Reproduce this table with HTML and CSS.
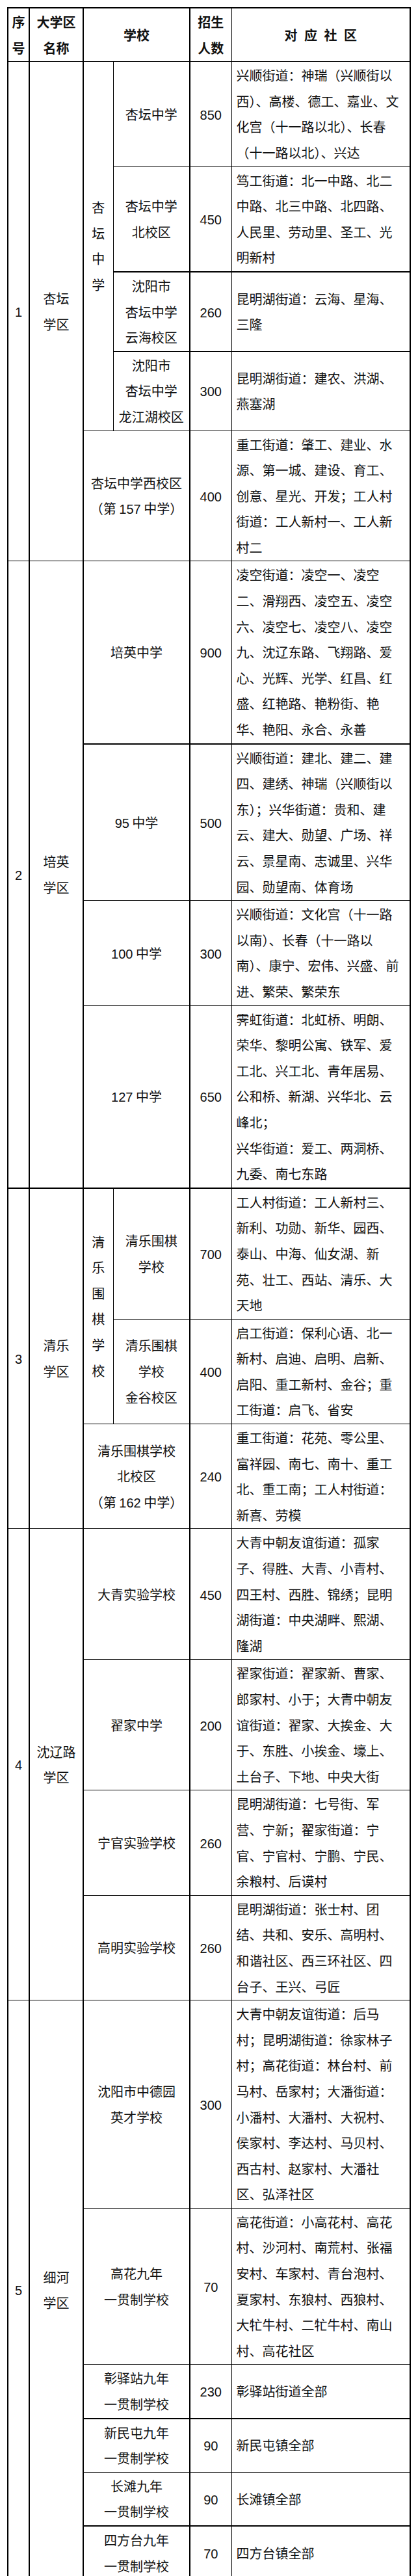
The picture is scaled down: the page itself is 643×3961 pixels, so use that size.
FILE: index.html
```html
<!DOCTYPE html>
<html lang="zh-CN">
<head>
<meta charset="utf-8">
<title>大学区对应社区</title>
<link rel="stylesheet" href="styles.css">
</head>
<body>
<div class="page">
<table class="t">
<colgroup><col class="w1"><col class="w2"><col class="w3"><col class="w4"><col class="w5"><col class="w6"></colgroup>
<thead>
<tr><th class="c1">序<br>号</th><th class="c2">大学区<br>名称</th><th colspan="2" class="sch">学校</th><th class="cnt">招生<br>人数</th><th class="com-h">对 应 社 区</th></tr>
</thead>
<tbody>
<tr><td rowspan="5" class="c1"><span class="n">1</span></td><td rowspan="5" class="c2">杏坛<br>学区</td><td rowspan="4" class="vt">杏<br>坛<br>中<br>学</td><td class="sch">杏坛中学</td><td class="cnt"><span class="n">850</span></td><td class="com">兴顺街道：神瑞（兴顺街以<br>西）、高楼、德工、嘉业、文<br>化宫（十一路以北）、长春<br>（十一路以北）、兴达</td></tr>
<tr><td class="sch">杏坛中学<br>北校区</td><td class="cnt"><span class="n">450</span></td><td class="com">笃工街道：北一中路、北二<br>中路、北三中路、北四路、<br>人民里、劳动里、圣工、光<br>明新村</td></tr>
<tr class="thick"><td class="sch">沈阳市<br>杏坛中学<br>云海校区</td><td class="cnt"><span class="n">260</span></td><td class="com">昆明湖街道：云海、星海、<br>三隆</td></tr>
<tr><td class="sch">沈阳市<br>杏坛中学<br>龙江湖校区</td><td class="cnt"><span class="n">300</span></td><td class="com">昆明湖街道：建农、洪湖、<br>燕塞湖</td></tr>
<tr><td colspan="2" class="sch">杏坛中学西校区<br>（第 <span class="n">157</span> 中学）</td><td class="cnt"><span class="n">400</span></td><td class="com">重工街道：肇工、建业、水<br>源、第一城、建设、育工、<br>创意、星光、开发；工人村<br>街道：工人新村一、工人新<br>村二</td></tr>

<tr><td rowspan="4" class="c1"><span class="n">2</span></td><td rowspan="4" class="c2">培英<br>学区</td><td colspan="2" class="sch">培英中学</td><td class="cnt"><span class="n">900</span></td><td class="com">凌空街道：凌空一、凌空<br>二、滑翔西、凌空五、凌空<br>六、凌空七、凌空八、凌空<br>九、沈辽东路、飞翔路、爱<br>心、光辉、光学、红昌、红<br>盛、红艳路、艳粉街、艳<br>华、艳阳、永合、永善</td></tr>
<tr class="thick"><td colspan="2" class="sch"><span class="n">95</span> 中学</td><td class="cnt"><span class="n">500</span></td><td class="com">兴顺街道：建北、建二、建<br>四、建绣、神瑞（兴顺街以<br>东）；兴华街道：贵和、建<br>云、建大、勋望、广场、祥<br>云、景星南、志诚里、兴华<br>园、勋望南、体育场</td></tr>
<tr><td colspan="2" class="sch"><span class="n">100</span> 中学</td><td class="cnt"><span class="n">300</span></td><td class="com">兴顺街道：文化宫（十一路<br>以南）、长春（十一路以<br>南）、康宁、宏伟、兴盛、前<br>进、繁荣、繁荣东</td></tr>
<tr><td colspan="2" class="sch"><span class="n">127</span> 中学</td><td class="cnt"><span class="n">650</span></td><td class="com">霁虹街道：北虹桥、明朗、<br>荣华、黎明公寓、铁军、爱<br>工北、兴工北、青年居易、<br>公和桥、新湖、兴华北、云<br>峰北；<br>兴华街道：爱工、两洞桥、<br>九委、南七东路</td></tr>

<tr class="thick"><td rowspan="3" class="c1"><span class="n">3</span></td><td rowspan="3" class="c2">清乐<br>学区</td><td rowspan="2" class="vt">清<br>乐<br>围<br>棋<br>学<br>校</td><td class="sch">清乐围棋<br>学校</td><td class="cnt"><span class="n">700</span></td><td class="com">工人村街道：工人新村三、<br>新利、功勋、新华、园西、<br>泰山、中海、仙女湖、新<br>苑、壮工、西站、清乐、大<br>天地</td></tr>
<tr><td class="sch">清乐围棋<br>学校<br>金谷校区</td><td class="cnt"><span class="n">400</span></td><td class="com">启工街道：保利心语、北一<br>新村、启迪、启明、启新、<br>启阳、重工新村、金谷；重<br>工街道：启飞、省安</td></tr>
<tr><td colspan="2" class="sch">清乐围棋学校<br>北校区<br>（第 <span class="n">162</span> 中学）</td><td class="cnt"><span class="n">240</span></td><td class="com">重工街道：花苑、零公里、<br>富祥园、南七、南十、重工<br>北、重工南；工人村街道：<br>新喜、劳模</td></tr>

<tr><td rowspan="4" class="c1"><span class="n">4</span></td><td rowspan="4" class="c2">沈辽路<br>学区</td><td colspan="2" class="sch">大青实验学校</td><td class="cnt"><span class="n">450</span></td><td class="com">大青中朝友谊街道：孤家<br>子、得胜、大青、小青村、<br>四王村、西胜、锦绣；昆明<br>湖街道：中央湖畔、熙湖、<br>隆湖</td></tr>
<tr><td colspan="2" class="sch">翟家中学</td><td class="cnt"><span class="n">200</span></td><td class="com">翟家街道：翟家新、曹家、<br>郎家村、小于；大青中朝友<br>谊街道：翟家、大挨金、大<br>于、东胜、小挨金、壕上、<br>土台子、下地、中央大街</td></tr>
<tr><td colspan="2" class="sch">宁官实验学校</td><td class="cnt"><span class="n">260</span></td><td class="com">昆明湖街道：七号街、军<br>营、宁新；翟家街道：宁<br>官、宁官村、宁鹏、宁民、<br>余粮村、后谟村</td></tr>
<tr><td colspan="2" class="sch">高明实验学校</td><td class="cnt"><span class="n">260</span></td><td class="com">昆明湖街道：张士村、团<br>结、共和、安乐、高明村、<br>和谐社区、西三环社区、四<br>台子、王兴、弓匠</td></tr>

<tr><td rowspan="6" class="c1"><span class="n">5</span></td><td rowspan="6" class="c2">细河<br>学区</td><td colspan="2" class="sch">沈阳市中德园<br>英才学校</td><td class="cnt"><span class="n">300</span></td><td class="com">大青中朝友谊街道：后马<br>村；昆明湖街道：徐家林子<br>村；高花街道：林台村、前<br>马村、岳家村；大潘街道：<br>小潘村、大潘村、大祝村、<br>侯家村、李达村、马贝村、<br>西古村、赵家村、大潘社<br>区、弘泽社区</td></tr>
<tr><td colspan="2" class="sch">高花九年<br>一贯制学校</td><td class="cnt"><span class="n">70</span></td><td class="com">高花街道：小高花村、高花<br>村、沙河村、南荒村、张福<br>安村、车家村、青台泡村、<br>夏家村、东狼村、西狼村、<br>大牤牛村、二牤牛村、南山<br>村、高花社区</td></tr>
<tr><td colspan="2" class="sch">彰驿站九年<br>一贯制学校</td><td class="cnt"><span class="n">230</span></td><td class="com">彰驿站街道全部</td></tr>
<tr class="thick"><td colspan="2" class="sch">新民屯九年<br>一贯制学校</td><td class="cnt"><span class="n">90</span></td><td class="com">新民屯镇全部</td></tr>
<tr><td colspan="2" class="sch">长滩九年<br>一贯制学校</td><td class="cnt"><span class="n">90</span></td><td class="com">长滩镇全部</td></tr>
<tr class="thick"><td colspan="2" class="sch">四方台九年<br>一贯制学校</td><td class="cnt"><span class="n">70</span></td><td class="com">四方台镇全部</td></tr>
</tbody>
</table>
</div>
</body>
</html>
```

FILE: styles.css
```css
html, body {
  margin: 0;
  padding: 0;
  background: #fff;
}

body {
  width: 643px;
  min-height: 3961px;
  font-family: "Noto Sans CJK SC", "Noto Sans", sans-serif;
  color: #111;
}

.page {
  padding: 11px 0 0 11px;
}

.t {
  border-collapse: collapse;
  table-layout: fixed;
  width: 619px;
  border: 2px solid #000;
}

.w1 { width: 33px; }
.w2 { width: 83px; }
.w3 { width: 46px; }
.w4 { width: 118px; }
.w5 { width: 64px; }
.w6 { width: 275px; }

.t th,
.t td {
  border: 1px solid #000;
  padding: 1px 0;
  font-size: 20px;
  line-height: 39.6px;
  text-align: center;
  vertical-align: middle;
  white-space: nowrap;
  font-weight: 400;
}

.t th {
  font-weight: 700;
}

.t .c1,
.t .c2,
.t .sch,
.t .com,
.t .com-h {
  border-right-width: 2px;
}

.t .com {
  text-align: left;
  padding-left: 7px;
  padding-right: 2px;
}

.com-h {
  word-spacing: 6px;
}

.t .thick > td {
  border-top-width: 2px;
}

.n {
  font-family: "Liberation Sans", sans-serif;
  line-height: 20px;
}
```
